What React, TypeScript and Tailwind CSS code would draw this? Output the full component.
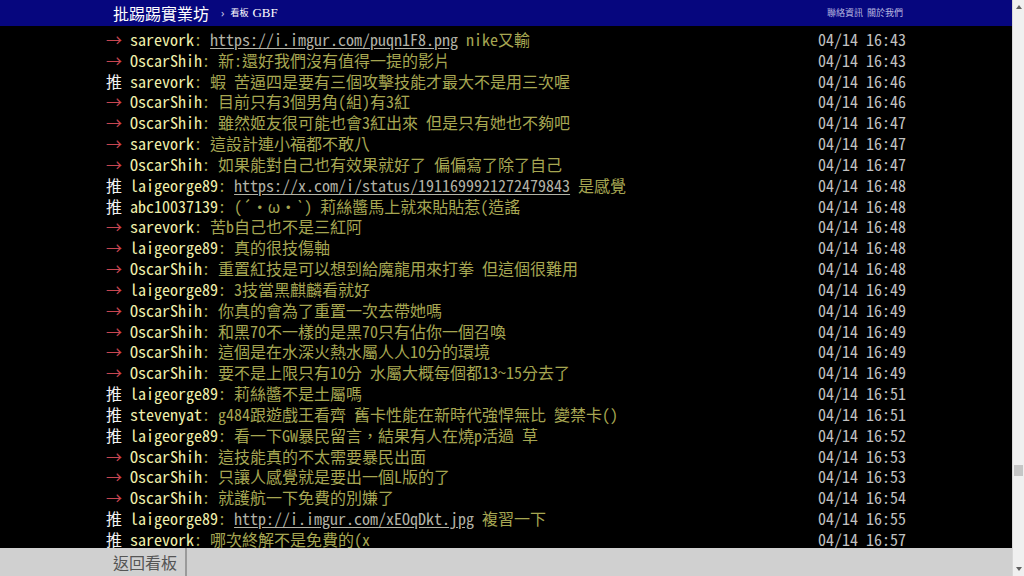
import React from "react";

type Row = { tag: "推" | "→"; user: string; pre?: string; link?: string; post?: string; time: string };

const rows: Row[] = [
  { tag: "→", user: "sarevork", pre: "", link: "https://i.imgur.com/puqn1F8.png", post: " nike又輸", time: "04/14 16:43" },
  { tag: "→", user: "OscarShih", pre: "新:還好我們沒有值得一提的影片", time: "04/14 16:43" },
  { tag: "推", user: "sarevork", pre: "蝦 苦逼四是要有三個攻擊技能才最大不是用三次喔", time: "04/14 16:46" },
  { tag: "→", user: "OscarShih", pre: "目前只有3個男角(組)有3紅", time: "04/14 16:46" },
  { tag: "→", user: "OscarShih", pre: "雖然姬友很可能也會3紅出來 但是只有她也不夠吧", time: "04/14 16:47" },
  { tag: "→", user: "sarevork", pre: "這設計連小福都不敢八", time: "04/14 16:47" },
  { tag: "→", user: "OscarShih", pre: "如果能對自己也有效果就好了 偏偏寫了除了自己", time: "04/14 16:47" },
  { tag: "推", user: "laigeorge89", pre: "", link: "https://x.com/i/status/1911699921272479843", post: " 是感覺", time: "04/14 16:48" },
  { tag: "推", user: "abc10037139", pre: "(´・ω・`) 莉絲醬馬上就來貼貼惹(造謠", time: "04/14 16:48" },
  { tag: "→", user: "sarevork", pre: "苦b自己也不是三紅阿", time: "04/14 16:48" },
  { tag: "→", user: "laigeorge89", pre: "真的很技傷軸", time: "04/14 16:48" },
  { tag: "→", user: "OscarShih", pre: "重置紅技是可以想到給魔龍用來打拳 但這個很難用", time: "04/14 16:48" },
  { tag: "→", user: "laigeorge89", pre: "3技當黑麒麟看就好", time: "04/14 16:49" },
  { tag: "→", user: "OscarShih", pre: "你真的會為了重置一次去帶她嗎", time: "04/14 16:49" },
  { tag: "→", user: "OscarShih", pre: "和黑70不一樣的是黑70只有佔你一個召喚", time: "04/14 16:49" },
  { tag: "→", user: "OscarShih", pre: "這個是在水深火熱水屬人人10分的環境", time: "04/14 16:49" },
  { tag: "→", user: "OscarShih", pre: "要不是上限只有10分 水屬大概每個都13~15分去了", time: "04/14 16:49" },
  { tag: "推", user: "laigeorge89", pre: "莉絲醬不是土屬嗎", time: "04/14 16:51" },
  { tag: "推", user: "stevenyat", pre: "g484跟遊戲王看齊 舊卡性能在新時代強悍無比 變禁卡()", time: "04/14 16:51" },
  { tag: "推", user: "laigeorge89", pre: "看一下GW暴民留言，結果有人在燒p活過 草", time: "04/14 16:52" },
  { tag: "→", user: "OscarShih", pre: "這技能真的不太需要暴民出面", time: "04/14 16:53" },
  { tag: "→", user: "OscarShih", pre: "只讓人感覺就是要出一個L版的了", time: "04/14 16:53" },
  { tag: "→", user: "OscarShih", pre: "就護航一下免費的別嫌了", time: "04/14 16:54" },
  { tag: "推", user: "laigeorge89", pre: "", link: "http://i.imgur.com/xEOqDkt.jpg", post: " 複習一下", time: "04/14 16:55" },
  { tag: "推", user: "sarevork", pre: "哪次終解不是免費的(x", time: "04/14 16:57" },
];

const mono = { fontFamily: '"Noto Sans Mono CJK TC", "Noto Sans CJK TC", "Liberation Mono", monospace' };
const cjk = { fontFamily: '"Noto Sans CJK TC", sans-serif' };

function PushRow({ r }: { r: Row }) {
  return (
    <div className="flex h-[20.83px] items-center whitespace-pre text-[16px] leading-[20.83px]">
      <span className={r.tag === "推" ? "text-[#f2f2f2]" : "text-[#c84650]"}>{r.tag} </span>
      <span className="text-[#f0f0ac]">{r.user}</span>
      <span className="text-[#a6a652]">
        : {r.pre}
        {r.link && <span className="text-[#b2b2a6] underline underline-offset-2">{r.link}</span>}
        {r.post}
      </span>
      <span className="ml-auto text-[#c2c2c2]">{r.time}</span>
    </div>
  );
}

export default function App() {
  return (
    <div className="flex h-[576px] w-[1024px] overflow-hidden bg-black">
      <div className="flex h-full flex-1 flex-col">
        <div className="flex h-[26px] shrink-0 items-center bg-[#06067e]">
          <div className="mx-auto flex w-[800px] items-center pl-[7px] pr-[3px]">
            <span className="text-[16px] leading-none text-white" style={cjk}>
              批踢踢實業坊
            </span>
            <span className="ml-[12px] text-[11px] text-[#c8c8e8]">›</span>
            <span className="ml-[6px] text-[9px] text-white" style={cjk}>看板</span>
            <span className="ml-[4px] text-[13px] text-white" style={{ fontFamily: '"Liberation Serif", serif' }}>GBF</span>
            <div className="ml-auto flex gap-[4px] text-[9px] text-[#b8b8e0]" style={cjk}>
              <span>聯絡資訊</span>
              <span>關於我們</span>
            </div>
          </div>
        </div>
        <div className="flex-1 overflow-hidden" style={mono}>
          <div className="mx-auto w-[800px] pt-[3px]">
            {rows.map((r, i) => (
              <PushRow key={i} r={r} />
            ))}
          </div>
        </div>
        <div className="flex h-[28px] shrink-0 items-stretch bg-[#d0d0d0]">
          <div className="mx-auto flex w-[800px]">
            <div className="flex items-center border-r-2 border-[#9a9a9a] pl-[7px] pr-[8px] text-[16px] text-[#555]" style={cjk}>
              返回看板
            </div>
          </div>
        </div>
      </div>
      <div className="flex h-full w-[12px] shrink-0 flex-col items-center border-l border-[#d8d8d8] bg-[#f0f0f0]">
        <div className="mt-[5px] h-0 w-0 border-x-[3px] border-b-[4px] border-x-transparent border-b-[#606060]" />
        <div className="mt-[456px] h-[11px] w-[9px] bg-[#c6c6c6]" />
        <div className="mt-auto mb-[5px] h-0 w-0 border-x-[3px] border-t-[4px] border-x-transparent border-t-[#606060]" />
      </div>
    </div>
  );
}
